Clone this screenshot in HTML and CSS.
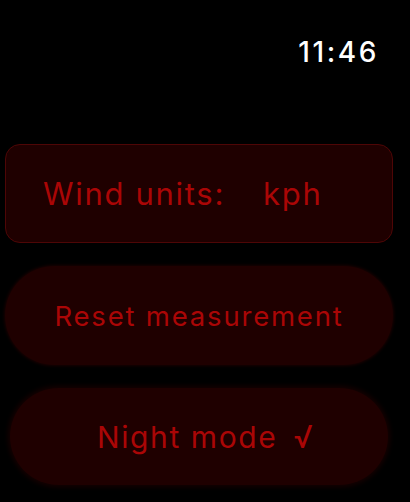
FILE: index.html
```html
<!DOCTYPE html>
<html>
<head>
<meta charset="utf-8">
<link rel="stylesheet" href="styles.css">
</head>
<body>
<div class="screen">
  <header class="status">
    <span class="time">11:46</span>
  </header>
  <main class="list">
    <div class="card card-units">
      <span class="label">Wind units:</span>
      <span class="value">kph</span>
    </div>
    <div class="card pill pill-reset">
      <span class="label-sm">Reset measurement</span>
    </div>
    <div class="card pill pill-night">
      <span class="label">Night mode</span>
      <span class="check">√</span>
    </div>
  </main>
</div>
</body>
</html>
```

FILE: styles.css
```css
html, body {
  margin: 0;
  padding: 0;
  background: #000;
}
.screen {
  width: 410px;
  height: 502px;
  overflow: hidden;
  background: #000;
  font-family: Inter, "Liberation Sans", sans-serif;
}
.status {
  display: flex;
  justify-content: flex-end;
  padding: 35px 31px 0 0;
  height: 108px;
  box-sizing: border-box;
}
.time {
  color: #fff;
  font-size: 28px;
  font-weight: 500;
  line-height: 34px;
  letter-spacing: 2.6px;
}
.list {
  display: flex;
  flex-direction: column;
  gap: 23px;
  padding-top: 36px;
}
.card {
  display: flex;
  align-items: center;
  box-sizing: border-box;
  color: #aa0606;
  background: #1f0000;
}
.card-units {
  margin-left: 5px;
  width: 388px;
  height: 99px;
  border: 1px solid #4e0606;
  border-radius: 15px;
  padding-left: 37px;
}
.label {
  font-size: 31px;
  letter-spacing: 1.7px;
}
.value {
  font-size: 31px;
  letter-spacing: 1.7px;
  margin-left: 38px;
}
.pill {
  border-radius: 50px;
  box-shadow: 0 0 3px 1px #1a0000;
}
.pill-reset {
  margin-left: 5px;
  width: 388px;
  height: 99px;
  justify-content: center;
}
.label-sm {
  font-size: 27.5px;
  letter-spacing: 1.8px;
}
.pill-night {
  margin-left: 10px;
  width: 378px;
  height: 97px;
  padding-left: 87px;
  box-shadow: 0 0 5px 2px #160000;
}
.pill-night .label {
  font-size: 30px;
  letter-spacing: 1.6px;
}
.check {
  font-size: 31px;
  margin-left: 16px;
}
```
